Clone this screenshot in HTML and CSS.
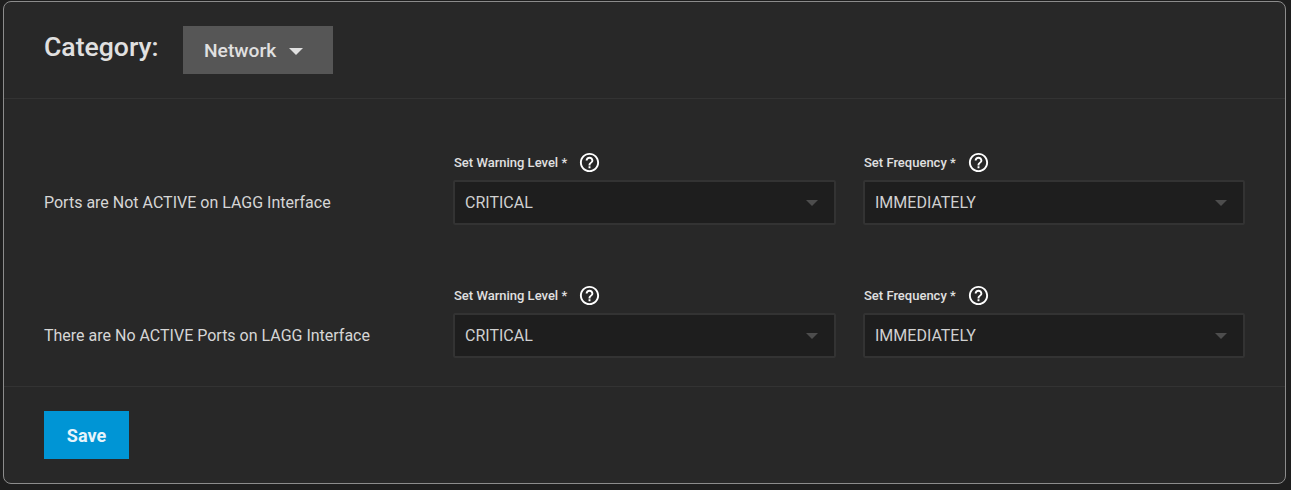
FILE: index.html
```html
<!DOCTYPE html>
<html>
<head>
	<meta charset="utf-8">
	<title>Alert Settings</title>
	<link rel="stylesheet" href="styles.css">
</head>
<body>
	<div class="card">
		<div class="head">
			<h1>Category:</h1>
			<button class="menu">Network<span class="caret"></span></button>
		</div>

		<div class="rows">
			<div class="row">
				<div class="name">Ports are Not ACTIVE on LAGG Interface</div>
				<div class="field">
					<label>Set Warning Level * <svg class="help" viewBox="0 0 24 24"><path d="M11 18h2v-2h-2v2zm1-16C6.48 2 2 6.48 2 12s4.48 10 10 10 10-4.48 10-10S17.52 2 12 2zm0 18c-4.41 0-8-3.59-8-8s3.59-8 8-8 8 3.59 8 8-3.59 8-8 8zm0-14c-2.21 0-4 1.79-4 4h2c0-1.1.9-2 2-2s2 .9 2 2c0 2-3 1.75-3 5h2c0-2.25 3-2.5 3-5 0-2.21-1.79-4-4-4z"/></svg></label>
					<div class="select">CRITICAL<span class="arrow"></span></div>
				</div>
				<div class="field">
					<label>Set Frequency * <svg class="help" viewBox="0 0 24 24"><path d="M11 18h2v-2h-2v2zm1-16C6.48 2 2 6.48 2 12s4.48 10 10 10 10-4.48 10-10S17.52 2 12 2zm0 18c-4.41 0-8-3.59-8-8s3.59-8 8-8 8 3.59 8 8-3.59 8-8 8zm0-14c-2.21 0-4 1.79-4 4h2c0-1.1.9-2 2-2s2 .9 2 2c0 2-3 1.75-3 5h2c0-2.25 3-2.5 3-5 0-2.21-1.79-4-4-4z"/></svg></label>
					<div class="select">IMMEDIATELY<span class="arrow"></span></div>
				</div>
			</div>
			<div class="row">
				<div class="name">There are No ACTIVE Ports on LAGG Interface</div>
				<div class="field">
					<label>Set Warning Level * <svg class="help" viewBox="0 0 24 24"><path d="M11 18h2v-2h-2v2zm1-16C6.48 2 2 6.48 2 12s4.48 10 10 10 10-4.48 10-10S17.52 2 12 2zm0 18c-4.41 0-8-3.59-8-8s3.59-8 8-8 8 3.59 8 8-3.59 8-8 8zm0-14c-2.21 0-4 1.79-4 4h2c0-1.1.9-2 2-2s2 .9 2 2c0 2-3 1.75-3 5h2c0-2.25 3-2.5 3-5 0-2.21-1.79-4-4-4z"/></svg></label>
					<div class="select">CRITICAL<span class="arrow"></span></div>
				</div>
				<div class="field">
					<label>Set Frequency * <svg class="help" viewBox="0 0 24 24"><path d="M11 18h2v-2h-2v2zm1-16C6.48 2 2 6.48 2 12s4.48 10 10 10 10-4.48 10-10S17.52 2 12 2zm0 18c-4.41 0-8-3.59-8-8s3.59-8 8-8 8 3.59 8 8-3.59 8-8 8zm0-14c-2.21 0-4 1.79-4 4h2c0-1.1.9-2 2-2s2 .9 2 2c0 2-3 1.75-3 5h2c0-2.25 3-2.5 3-5 0-2.21-1.79-4-4-4z"/></svg></label>
					<div class="select">IMMEDIATELY<span class="arrow"></span></div>
				</div>
			</div>
		</div>

		<div class="foot">
			<button class="save">Save</button>
		</div>
	</div>
</body>
</html>
```

FILE: styles.css
```css
* {
	box-sizing: border-box;
}

html, body {
	height: 100%;
}

body {
	margin: 0;
	padding: 1px 5px 6px 3px;
	background: #1e1e1e;
	font-family: Roboto, sans-serif;
	color: #e0e0e0;
	overflow: hidden;
}

.card {
	height: 483px;
	border: 1px solid #8c8c8c;
	border-radius: 8px;
	background: #282828;
	display: flex;
	flex-direction: column;
}

.head {
	height: 97px;
	flex: none;
	padding: 24px 0 0 40px;
	display: flex;
	align-items: flex-start;
	border-bottom: 1px solid #333;
}

h1 {
	margin: 0;
	font-size: 26.6px;
	font-weight: 500;
	line-height: 48px;
	height: 48px;
	margin-top: -3px;
	width: 115px;
	white-space: nowrap;
	color: #e0e0e0;
}

.menu {
	width: 150px;
	height: 48px;
	margin-left: 24px;
	border: 0;
	background: #565656;
	color: #e0e0e0;
	font-family: inherit;
	font-size: 19.2px;
	font-weight: 500;
	padding: 0 0 0 21px;
	display: flex;
	align-items: center;
}

.caret {
	margin-left: 13px;
	margin-top: 3px;
	border-left: 7px solid transparent;
	border-right: 7px solid transparent;
	border-top: 7px solid #e0e0e0;
}

.rows {
	flex: 1;
	padding: 0 40px;
	display: flex;
	flex-direction: column;
	border-bottom: 1px solid #333;
}

.row {
	height: 133px;
	display: flex;
	align-items: flex-start;
	padding-top: 54px;
}

.name {
	width: 409px;
	flex: none;
	margin-top: 38px;
	font-size: 16px;
	line-height: 24px;
	color: #d6d6d6;
}

.field {
	width: 383px;
	flex: none;
	margin-right: 27px;
}

.field:last-child {
	width: 382px;
	margin-right: 0;
}

label {
	display: flex;
	align-items: center;
	height: 18px;
	padding-left: 1px;
	font-size: 13px;
	font-weight: 500;
	white-space: pre;
	color: #e0e0e0;
}

.help {
	width: 23px;
	height: 23px;
	margin-left: 7.5px;
	fill: #fff;
}

.select {
	margin-top: 9px;
	height: 45px;
	padding: 0 10px;
	display: flex;
	align-items: center;
	justify-content: space-between;
	background: #1e1e1e;
	border: 2px solid #333;
	border-radius: 2px;
	font-size: 16px;
	color: #d0d0d0;
}

.arrow {
	margin-right: 6px;
	border-left: 6px solid transparent;
	border-right: 6px solid transparent;
	border-top: 6px solid #4d4d4d;
}

.foot {
	height: 96px;
	flex: none;
	padding: 24px 40px 0;
}

.save {
	width: 85px;
	height: 48px;
	border: 0;
	background: #0095d5;
	color: #e6f4fb;
	font-family: inherit;
	font-size: 18px;
	font-weight: 700;
}
```
